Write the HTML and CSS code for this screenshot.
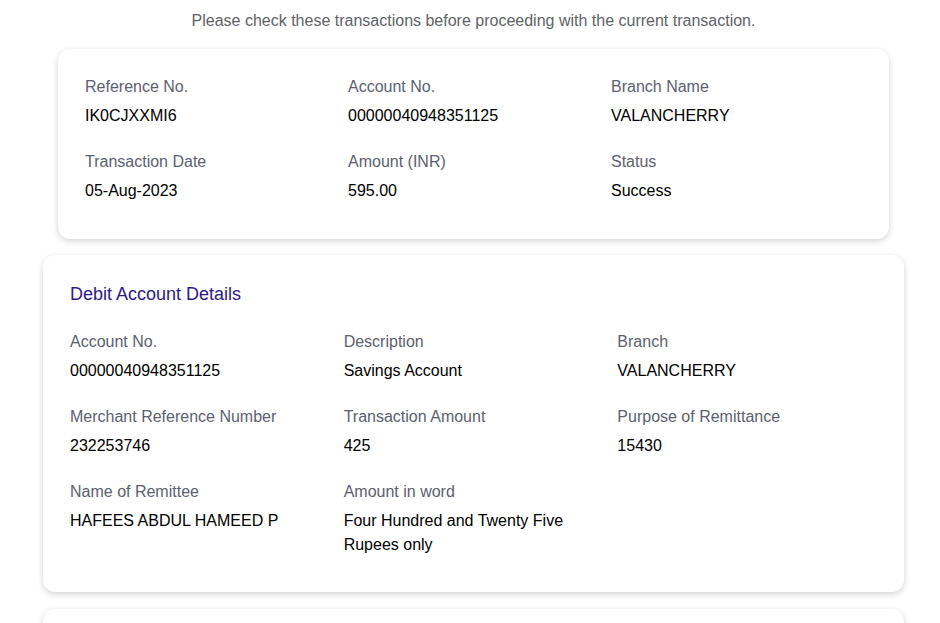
FILE: index.html
```html
<!DOCTYPE html>
<html>
<head>
<meta charset="utf-8">
<link rel="stylesheet" href="styles.css">
</head>
<body>
<div class="wrap">
  <p class="notice">Please check these transactions before proceeding with the current transaction.</p>
  <div class="card card-inset">
    <div class="grid grid-a">
      <div class="field"><div class="label">Reference No.</div><div class="value">IK0CJXXMI6</div></div>
      <div class="field"><div class="label">Account No.</div><div class="value">00000040948351125</div></div>
      <div class="field"><div class="label">Branch Name</div><div class="value">VALANCHERRY</div></div>
      <div class="field"><div class="label">Transaction Date</div><div class="value">05-Aug-2023</div></div>
      <div class="field"><div class="label">Amount (INR)</div><div class="value">595.00</div></div>
      <div class="field"><div class="label">Status</div><div class="value">Success</div></div>
    </div>
  </div>
  <div class="card card-full">
    <h2 class="title">Debit Account Details</h2>
    <div class="grid grid-b">
      <div class="field"><div class="label">Account No.</div><div class="value">00000040948351125</div></div>
      <div class="field"><div class="label">Description</div><div class="value">Savings Account</div></div>
      <div class="field"><div class="label">Branch</div><div class="value">VALANCHERRY</div></div>
      <div class="field"><div class="label">Merchant Reference Number</div><div class="value">232253746</div></div>
      <div class="field"><div class="label">Transaction Amount</div><div class="value">425</div></div>
      <div class="field"><div class="label">Purpose of Remittance</div><div class="value">15430</div></div>
      <div class="field"><div class="label">Name of Remittee</div><div class="value">HAFEES ABDUL HAMEED P</div></div>
      <div class="field"><div class="label">Amount in word</div><div class="value wrapv">Four Hundred and Twenty Five Rupees only</div></div>
    </div>
  </div>
  <div class="card card-full card-next"></div>
</div>
</body>
</html>
```

FILE: styles.css
```css
html, body {
  margin: 0;
  padding: 0;
  background: #fff;
  overflow: hidden;
}
body {
  font-family: "Liberation Sans", Arial, sans-serif;
  font-size: 16px;
  color: #000;
}
.wrap {
  width: 861px;
  margin-left: 43px;
}
.notice {
  margin: 0;
  padding-top: 9px;
  height: 49px;
  line-height: 24px;
  box-sizing: border-box;
  text-align: center;
  color: #5f6368;
  font-size: 16px;
}
.card {
  background: #fff;
  border-radius: 12px;
  box-shadow: 0 2px 6px rgba(0, 0, 0, 0.18);
  box-sizing: border-box;
}
.card-inset {
  margin: 0 15px;
  height: 190px;
  padding: 26px 15px 0 27px;
}
.card-full {
  margin-top: 16px;
  height: 337px;
  padding: 27px 13px 0 27px;
}
.card-next {
  margin-top: 17px;
  height: 60px;
}
.grid {
  display: grid;
  grid-template-columns: repeat(3, 1fr);
  row-gap: 22px;
}
.field {
  line-height: 24px;
}
.label {
  color: #5b6170;
  margin-bottom: 5px;
}
.value {
  color: #000;
}
.wrapv {
  max-width: 230px;
}
.title {
  margin: 0 0 24px 0;
  font-size: 18px;
  font-weight: normal;
  line-height: 24px;
  color: #2e1a87;
}
```
